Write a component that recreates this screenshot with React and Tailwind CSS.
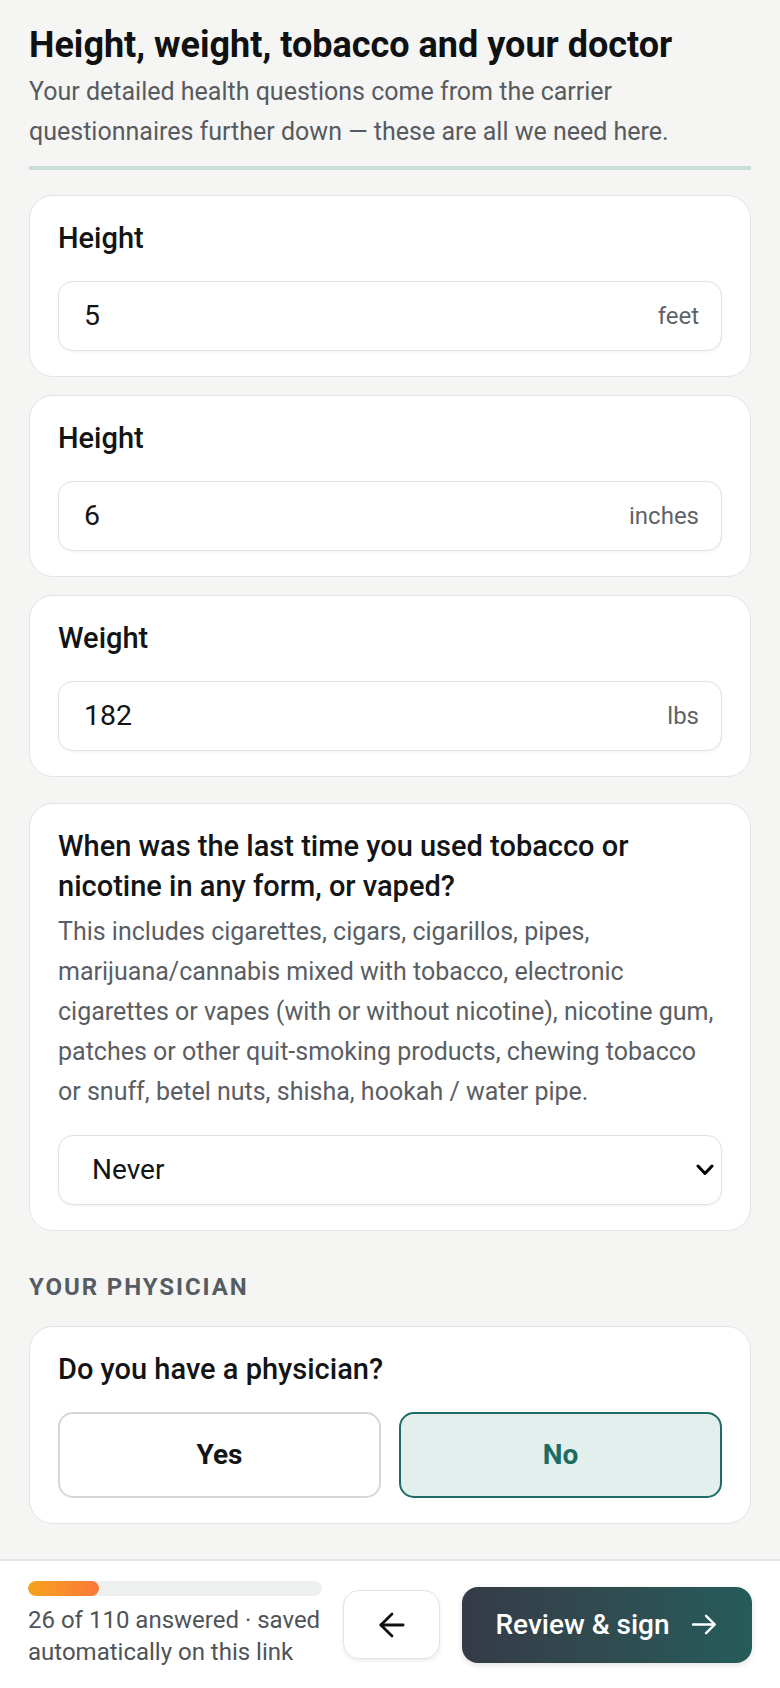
import { ArrowLeft } from 'lucide-react';

const fields = [
    { label: 'Height', value: '5', unit: 'feet' },
    { label: 'Height', value: '6', unit: 'inches' },
    { label: 'Weight', value: '182', unit: 'lbs' },
];

const Card = ({ className = '', children }) => (
    <div className={`rounded-[24px] border border-[#e4e4e4] bg-white px-[28px] pt-[22px] pb-[25px] ${className}`}>
        {children}
    </div>
);

const Label = ({ children }) => (
    <div className="text-[29px] font-medium leading-[40px] text-[#121416]">{children}</div>
);

const App = () => {
    return (
        <div className="flex h-screen flex-col bg-[#f5f5f3] font-[Roboto,sans-serif] text-[#121416]">
            <main className="flex-1 overflow-hidden px-[29px] pt-[23px]">
                <h1 className="text-[36px] font-bold leading-[44px] text-[#0f1113]">
                    Height, weight, tobacco and your doctor
                </h1>
                <p className="mt-[5px] text-[25px] leading-[40px] text-[#575b61]">
                    Your detailed health questions come from the carrier questionnaires further down — these are all we need here.
                </p>
                <div className="mt-[14px] h-[4px] bg-[#c8dfdc]"></div>

                <div className="mt-[25px] flex flex-col gap-[18px]">
                    {fields.map((f, i) => (
                        <Card key={i}>
                            <Label>{f.label}</Label>
                            <div className="mt-[23px] flex h-[70px] items-center rounded-[15px] border border-[#e0e2e5] bg-white pl-[25px] pr-[22px] shadow-[0_1px_3px_rgba(0,0,0,0.06)]">
                                <input
                                    readOnly
                                    value={f.value}
                                    className="min-w-0 flex-1 bg-transparent text-[28.5px] text-[#121416] outline-none"
                                />
                                <span className="text-[24px] text-[#5f6368]">{f.unit}</span>
                            </div>
                        </Card>
                    ))}
                </div>

                <Card className="mt-[26px]">
                    <Label>When was the last time you used tobacco or nicotine in any form, or vaped?</Label>
                    <p className="mt-[6px] text-[25px] leading-[40px] text-[#5a5e64]">
                        This includes cigarettes, cigars, cigarillos, pipes, marijuana/cannabis mixed with tobacco, electronic cigarettes or vapes (with or without nicotine), nicotine gum, patches or other quit-smoking products, chewing tobacco or snuff, betel nuts, shisha, hookah / water pipe.
                    </p>
                    <div className="relative mt-[23px]">
                        <select
                            defaultValue="Never"
                            className="h-[70px] w-full appearance-none rounded-[15px] border border-[#e0e2e5] bg-white pl-[33px] text-[28px] text-[#121416] shadow-[0_1px_3px_rgba(0,0,0,0.06)] outline-none"
                        >
                            <option>Never</option>
                        </select>
                        <svg
                            className="pointer-events-none absolute right-[8px] top-1/2 -translate-y-1/2"
                            width="18" height="12" viewBox="0 0 18 12" fill="none"
                        >
                            <polyline points="2,2 9,9.5 16,2" stroke="#000" strokeWidth="3" strokeLinecap="round" strokeLinejoin="round" />
                        </svg>
                    </div>
                </Card>

                <div className="mt-[40px] mb-[23px] text-[24px] font-bold uppercase leading-[32px] tracking-[0.08em] text-[#575c63]">
                    Your physician
                </div>

                <Card>
                    <Label>Do you have a physician?</Label>
                    <div className="mt-[23px] grid grid-cols-2 gap-[18px]">
                        <button className="h-[86px] rounded-[15px] border-2 border-[#d6d6d6] bg-white text-[28px] font-bold text-[#121416]">
                            Yes
                        </button>
                        <button className="h-[86px] rounded-[15px] border-2 border-[#1f6b66] bg-[#e2efec] text-[28px] font-bold text-[#1d6b65]">
                            No
                        </button>
                    </div>
                </Card>
            </main>

            <footer className="flex h-[129px] shrink-0 items-center border-t-2 border-[#e6e6e6] bg-white px-[28px]">
                <div className="w-[296px]">
                    <div className="h-[15px] w-[294px] overflow-hidden rounded-full bg-[#eef0f0]">
                        <div className="h-full w-[24%] rounded-full bg-linear-to-r from-[#f6a21a] to-[#f97838]"></div>
                    </div>
                    <div className="mt-[8px] text-[24px] leading-[32px] text-[#4f5358]">
                        26 of 110 answered · saved automatically on this link
                    </div>
                </div>
                <button className="ml-[19px] flex h-[69px] w-[97px] items-center justify-center rounded-[16px] border border-[#e3e3e3] bg-white shadow-[0_2px_4px_rgba(0,0,0,0.08)]">
                    <ArrowLeft size={38} strokeWidth={1.75} color="#111" />
                </button>
                <button className="ml-[22px] flex h-[76px] flex-1 items-center justify-center gap-[20px] rounded-[16px] bg-linear-to-r from-[#353b47] to-[#245c5a] text-[28px] font-medium text-white shadow-[0_2px_6px_rgba(0,0,0,0.12)]">
                    <span>Review &amp; sign</span>
                    <svg width="29" height="29" viewBox="0 0 24 24" fill="none" stroke="currentColor" strokeWidth="2" strokeLinecap="round" strokeLinejoin="round">
                        <path d="M2.5 12h18M13.3 4.8 20.5 12l-7.2 7.2" />
                    </svg>
                </button>
            </footer>
        </div>
    );
};

export default App;
